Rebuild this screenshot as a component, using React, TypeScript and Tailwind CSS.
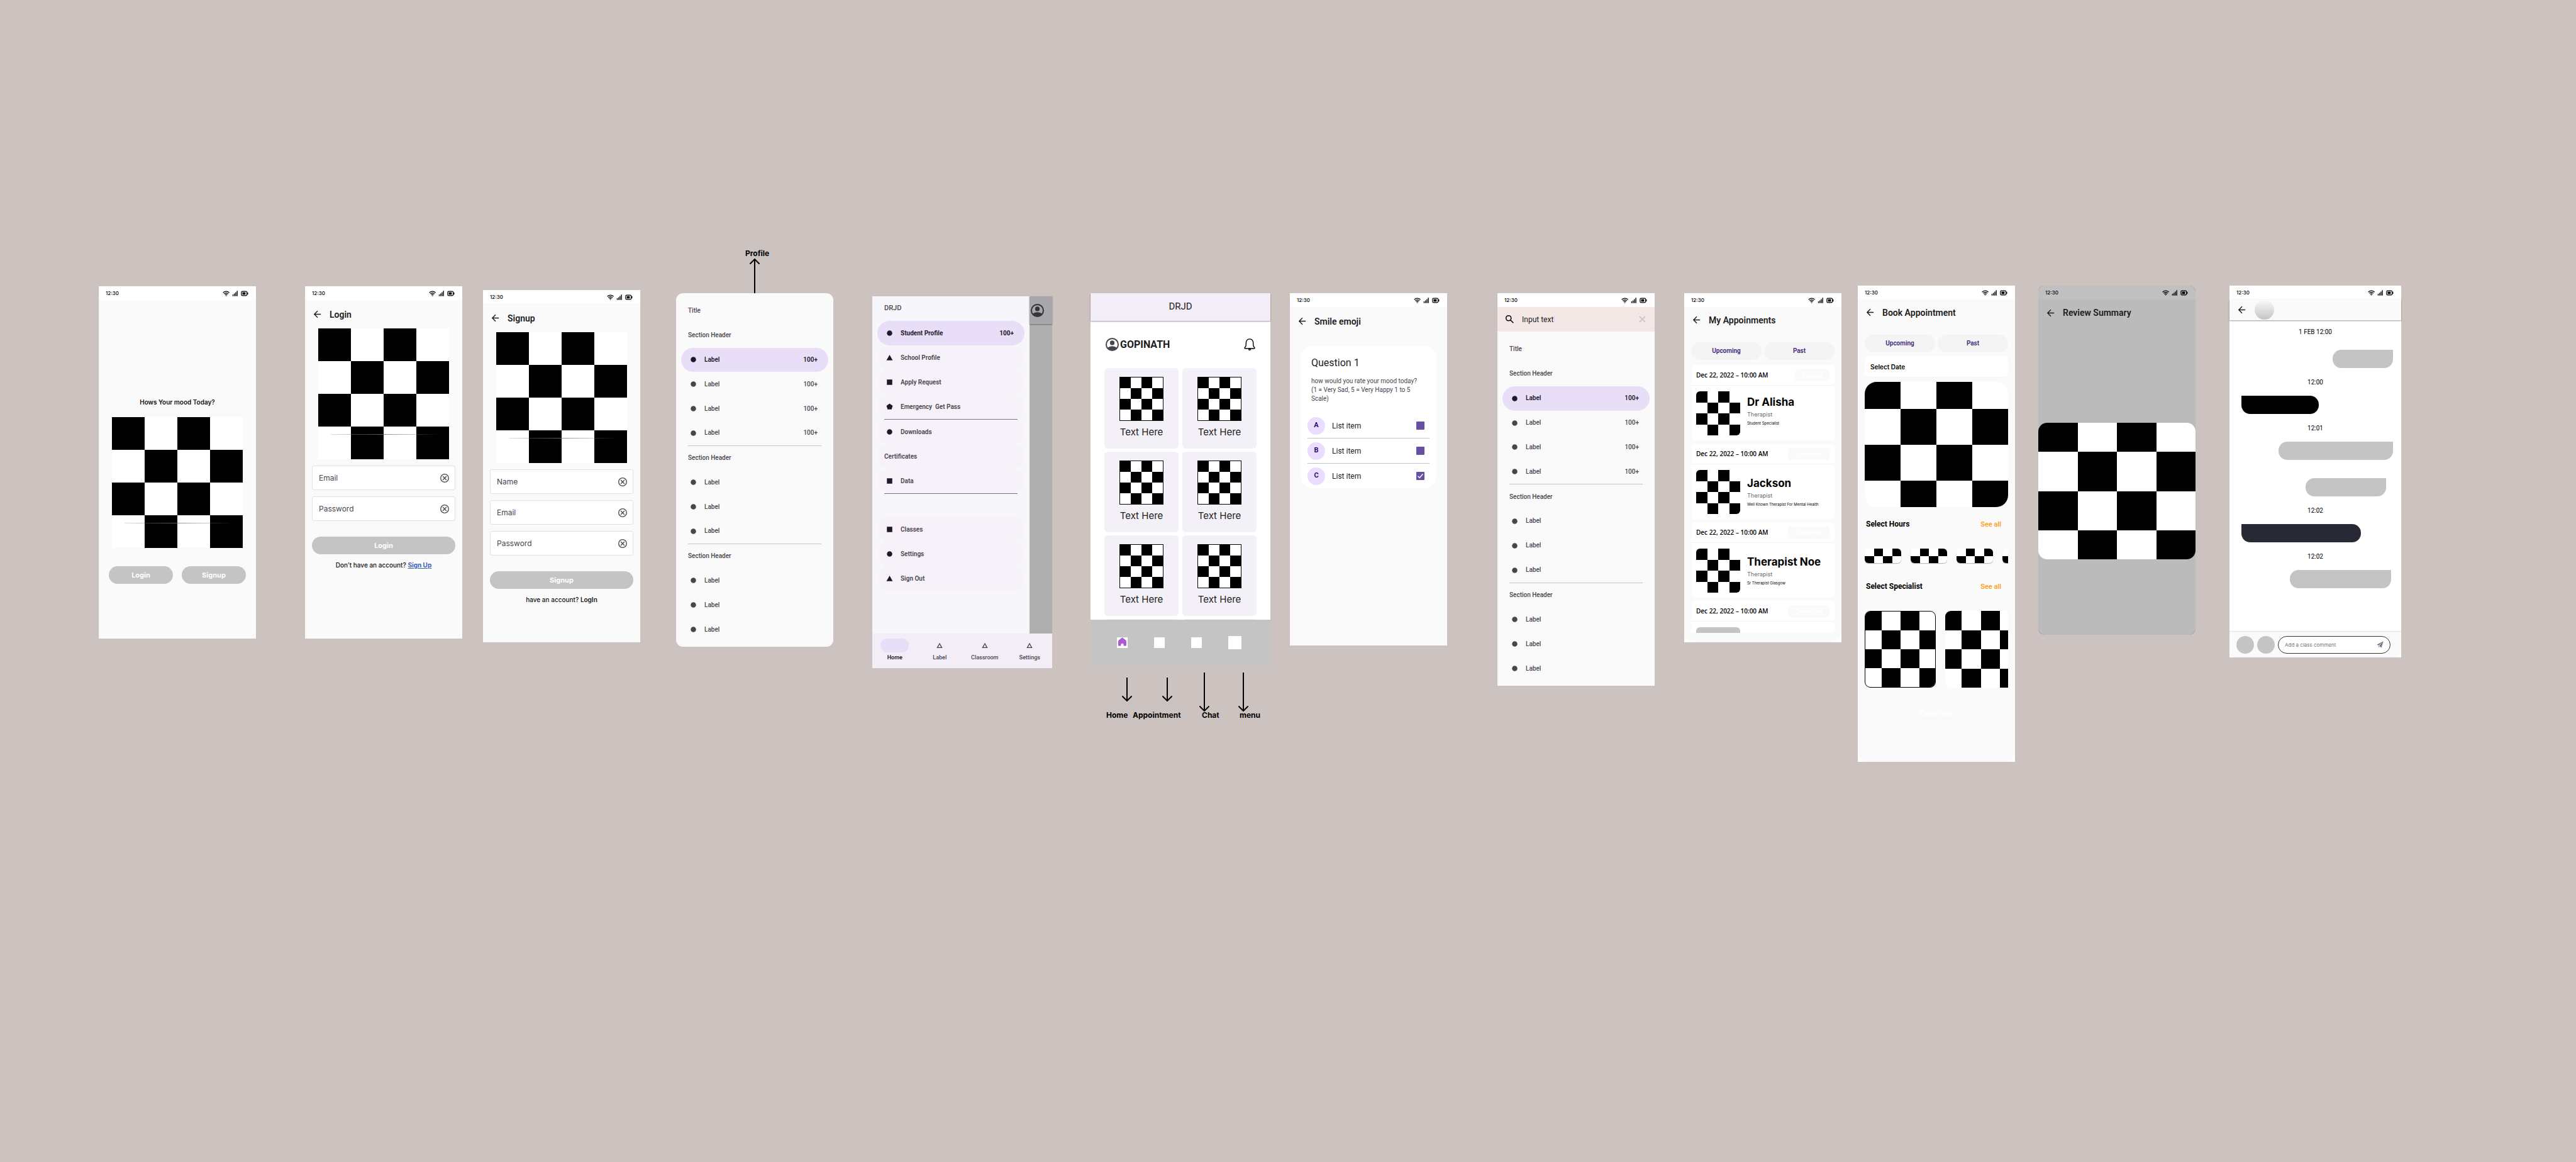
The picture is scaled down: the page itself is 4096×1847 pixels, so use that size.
import React from "react";
import type { ReactNode } from "react";

/* ---------- drawings ---------- */

function Checker({ className }: { className: string }) {
  const cells: ReactNode[] = [];
  for (let r = 0; r < 4; r++) {
    for (let c = 0; c < 4; c++) {
      if ((r + c) % 2 === 0) {
        cells.push(<rect key={`${r}-${c}`} x={c} y={r} width="1" height="1" fill="#000" />);
      }
    }
  }
  return (
    <svg
      aria-hidden="true"
      viewBox="0 0 4 4"
      preserveAspectRatio="xMidYMid slice"
      shapeRendering="crispEdges"
      className={`block shrink-0 overflow-hidden bg-white ${className}`}
    >
      {cells}
    </svg>
  );
}

function BackArrow() {
  return (
    <button aria-label="Back" className="size-[17px] shrink-0 text-[#1d1b20]">
      <svg viewBox="0 0 24 24" fill="currentColor" className="size-full">
        <path d="M20 11H7.83l5.59-5.59L12 4l-8 8 8 8 1.41-1.41L7.83 13H20v-2z" />
      </svg>
    </button>
  );
}

function AccountIcon({ className }: { className: string }) {
  return (
    <svg viewBox="0 0 30 30" className={className} aria-hidden="true">
      <circle cx="15" cy="15" r="13.6" fill="none" stroke="currentColor" strokeWidth="2.8" />
      <circle cx="15" cy="11.4" r="5.2" fill="currentColor" />
      <path d="M4 23C7 20.4 10.5 18.8 15 18.8S23 20.4 26 23A13.8 13.8 0 0 1 4 23z" fill="currentColor" />
    </svg>
  );
}

function ClearIcon() {
  return (
    <svg viewBox="0 0 20 20" className="size-[14px]" fill="none" stroke="#49454f" strokeWidth="1.9">
      <circle cx="10" cy="10" r="9" />
      <path d="M5.8 5.8l8.4 8.4M14.2 5.8l-8.4 8.4" />
    </svg>
  );
}

type Shape = "circle" | "triangle" | "square" | "pentagon";

function ShapeIcon({ shape }: { shape: Shape }) {
  return (
    <svg viewBox="0 0 24 24" className="size-[17px] shrink-0" fill="currentColor" aria-hidden="true">
      {shape === "circle" && <circle cx="12" cy="12" r="6" />}
      {shape === "triangle" && <path d="M12 5.5l7 12.5H5z" />}
      {shape === "square" && <rect x="6" y="6" width="12" height="12" />}
      {shape === "pentagon" && <path d="M12 5l7 5-2.6 8H7.6L5 10z" />}
    </svg>
  );
}

function StatusBar({ className = "bg-white" }: { className?: string }) {
  return (
    <div className={`flex h-[22px] shrink-0 items-center justify-between pl-[11px] pr-3 ${className}`}>
      <span className="font-['Inter'] text-[8px] leading-none font-medium text-black">12:30</span>
      <svg viewBox="0 0 59 13" className="h-[9px] w-[41px]" fill="none" stroke="#000" aria-hidden="true">
        <path d="M.8 4.8Q8 -1.4 15.2 4.8M3 7.4Q8 3.4 13 7.4M5.3 9.9Q8 7.8 10.7 9.9" strokeWidth="1.8" />
        <path d="M6.3 11.2h3.4L8 13z" fill="#000" stroke="none" />
        <path d="M23.7 8.5v4M26.9 6.5v6M30.1 3.5v9M33.3 .5v12" strokeWidth="2" />
        <rect x="43" y="1.6" width="12.6" height="9.8" rx="2.4" strokeWidth="1.7" />
        <rect x="45.4" y="3.8" width="7" height="5.4" fill="#000" stroke="none" />
        <path d="M57.4 4v5" strokeWidth="1.8" />
      </svg>
    </div>
  );
}

function Arrow({ className, height, down = false }: { className: string; height: number; down?: boolean }) {
  const tip = down ? height - 1 : 1;
  const wing = down ? height - 8 : 8;
  const tail = down ? 0 : height;
  return (
    <svg
      aria-hidden="true"
      width="18"
      height={height}
      viewBox={`0 0 18 ${height}`}
      fill="none"
      stroke="#000"
      strokeWidth="2"
      strokeLinecap="round"
      className={`absolute ${className}`}
    >
      <path d={`M9 ${tail}V${tip}M2 ${wing}L9 ${tip}L16 ${wing}`} />
    </svg>
  );
}

/* ---------- shared pieces ---------- */

function Screen({ className, label, children }: { className: string; label: string; children: ReactNode }) {
  return (
    <section aria-label={label} className={`absolute flex flex-col ${className}`}>
      {children}
    </section>
  );
}

function TitleBar({ title, className = "h-[45px]" }: { title: string; className?: string }) {
  return (
    <header className={`flex shrink-0 items-center gap-[11px] px-[11px] ${className}`}>
      <BackArrow />
      <h1 className="font-['Roboto'] text-[14px] leading-none font-semibold text-[#1d1b20]">{title}</h1>
    </header>
  );
}

function Illustration() {
  return (
    <div className="relative mx-auto w-[208px]">
      <Checker className="size-[208px]" />
      <div className="absolute top-[168px] left-5 h-px w-[168px] bg-linear-to-r from-[#666]/20 via-[#777]/80 to-[#666]/10" />
    </div>
  );
}

function Field({ id, label, type = "text" }: { id: string; label: string; type?: string }) {
  return (
    <div className="flex h-[39px] items-center rounded-[3px] border border-[#e2e2e4] bg-white pr-[9px] pl-[10px]">
      <input
        id={id}
        type={type}
        aria-label={label}
        placeholder={label}
        className="min-w-0 flex-1 bg-transparent font-['Inter'] text-[12px] text-[#49454f] outline-none placeholder:text-[#49454f]"
      />
      <button type="button" aria-label={`Clear ${label}`}>
        <ClearIcon />
      </button>
    </div>
  );
}

const pill =
  "h-7 rounded-full bg-[#c4c4c4] font-['Inter'] text-[11px] leading-none font-bold text-white";

function NavRow({
  label,
  count,
  shape = "circle",
  className,
}: {
  label: string;
  count?: string;
  shape?: Shape;
  className: string;
}) {
  return (
    <a
      href="#"
      className={`mx-2 flex items-center gap-[9px] rounded-full pr-[17px] pl-[11px] font-['Roboto'] text-[10px] leading-none whitespace-pre ${className}`}
    >
      <ShapeIcon shape={shape} />
      <span className="flex-1">{label}</span>
      {count && <span>{count}</span>}
    </a>
  );
}

function SectionText({ children }: { children: string }) {
  return (
    <h2 className="flex flex-1 items-center pl-[19px] font-['Roboto'] text-[10px] leading-none font-medium text-[#49454f]">
      {children}
    </h2>
  );
}

const Rule = () => <hr className="mx-[19px] border-[#c1c3cd]" />;

function DrawerList() {
  const plain = "flex-1 font-medium text-[#49454f]";
  const group = [0, 1, 2];
  return (
    <nav className="flex flex-1 flex-col pt-[9px] pb-2">
      <SectionText>Title</SectionText>
      <SectionText>Section Header</SectionText>
      <NavRow label="Label" count="100+" className="flex-1 bg-[#e8def8] font-semibold text-[#1d192b]" />
      {group.map((i) => (
        <NavRow key={i} label="Label" count="100+" className={plain} />
      ))}
      <Rule />
      <SectionText>Section Header</SectionText>
      {group.map((i) => (
        <NavRow key={i} label="Label" className={plain} />
      ))}
      <Rule />
      <SectionText>Section Header</SectionText>
      {group.map((i) => (
        <NavRow key={i} label="Label" className={plain} />
      ))}
    </nav>
  );
}

function Tabs() {
  return (
    <div className="mx-[11px] mt-[15px] grid shrink-0 grid-cols-2 gap-1">
      {["Upcoming", "Past"].map((t) => (
        <button
          key={t}
          className="h-7 rounded-full bg-[#f4f4f4] font-['Roboto'] text-[10px] leading-none font-semibold text-[#41277b]"
        >
          {t}
        </button>
      ))}
    </div>
  );
}

/* ---------- screens ---------- */

function Welcome() {
  return (
    <Screen label="Welcome" className="top-[455px] left-[157px] h-[560px] w-[250px] bg-[#fafafa]">
      <StatusBar />
      <p className="mt-[153px] text-center font-['Inter'] text-[10px] leading-[18px] font-semibold text-[#111]">
        Hows Your mood Today?
      </p>
      <div className="mt-[15px]">
        <Illustration />
      </div>
      <div className="mx-4 mt-[29px] grid grid-cols-2 gap-[14px]">
        <button className={pill}>Login</button>
        <button className={pill}>Signup</button>
      </div>
    </Screen>
  );
}

function Login() {
  return (
    <Screen label="Login" className="top-[455px] left-[485px] h-[560px] w-[250px] bg-[#fafafa]">
      <StatusBar />
      <TitleBar title="Login" />
      <Illustration />
      <form className="mx-[11px] mt-[10px] flex flex-col gap-[10px]">
        <Field id="login-email" label="Email" type="email" />
        <Field id="login-password" label="Password" type="password" />
        <button type="button" className={`mt-[15px] ${pill}`}>
          Login
        </button>
      </form>
      <p className="mt-2 text-center font-['Inter'] text-[10px] leading-[18px] font-medium text-[#111]">
        Don’t have an account?{" "}
        <a href="#" className="font-bold text-[#3d63b5] underline">
          Sign Up
        </a>
      </p>
    </Screen>
  );
}

function Signup() {
  return (
    <Screen label="Signup" className="top-[461px] left-[768px] h-[560px] w-[250px] bg-[#fafafa]">
      <StatusBar />
      <TitleBar title="Signup" />
      <Illustration />
      <form className="mx-[11px] mt-[10px] flex flex-col gap-[10px]">
        <Field id="signup-name" label="Name" />
        <Field id="signup-email" label="Email" type="email" />
        <Field id="signup-password" label="Password" type="password" />
        <button type="button" className={`mt-[15px] ${pill}`}>
          Signup
        </button>
      </form>
      <p className="mt-2 text-center font-['Inter'] text-[10px] leading-[18px] font-medium text-[#111]">
        have an account?{" "}
        <a href="#" className="font-semibold">
          LogIn
        </a>
      </p>
    </Screen>
  );
}

function ProfileDrawer() {
  return (
    <Screen label="Profile" className="top-[466px] left-[1075px] h-[562px] w-[250px] rounded-[11px] bg-[#fafafa]">
      <DrawerList />
    </Screen>
  );
}

function StudentDrawer() {
  const row = "h-[39px] bg-[#f7f2fa] font-semibold text-[#49454f] [&_svg]:text-[#1d192b]";
  return (
    <Screen label="Student menu" className="top-[471px] left-[1387px] h-[591px] w-[286px] bg-[#afafaf]">
      <div className="flex flex-1">
        <nav className="flex w-[250px] flex-col bg-[#f7f6fb]">
          <h1 className="flex h-[39px] items-center pl-[19px] font-['Roboto'] text-[11px] font-medium text-[#49454f]">
            DRJD
          </h1>
          <NavRow label="Student Profile" count="100+" className="h-[39px] bg-[#e8def8] font-bold text-[#1d192b]" />
          <NavRow label="School Profile" shape="triangle" className={row} />
          <NavRow label="Apply Request" shape="square" className={row} />
          <NavRow label="Emergency  Get Pass" shape="pentagon" className={row} />
          <hr className="mx-[19px] border-[#79747e]" />
          <NavRow label="Downloads" className={row} />
          <h2 className="mx-2 flex h-[39px] items-center rounded-full bg-[#f7f2fa] pl-[11px] font-['Roboto'] text-[10px] leading-none font-semibold text-[#49454f]">
            Certificates
          </h2>
          <NavRow label="Data" shape="square" className={row} />
          <hr className="mx-[19px] mb-[37px] border-[#79747e]" />
          <NavRow label="Classes" shape="square" className={row} />
          <NavRow label="Settings" className={row} />
          <NavRow label="Sign Out" shape="triangle" className={row} />
        </nav>
        <div className="flex-1">
          <div className="flex h-11 items-center bg-[#a9a6ac] pl-[2px] text-[#36343b] shadow-[0_1px_2px_rgba(0,0,0,0.4)]">
            <AccountIcon className="size-[21px]" />
          </div>
        </div>
      </div>
      <nav className="grid h-[55px] grid-cols-4 bg-[#f3edf7] pt-2">
        {["Home", "Label", "Classroom", "Settings"].map((t, i) => (
          <a
            key={t}
            href="#"
            className={`flex flex-col items-center gap-[3px] font-['Roboto'] text-[9px] leading-[11px] ${
              i === 0 ? "font-semibold text-[#1d1b20]" : "font-medium text-[#49454f]"
            }`}
          >
            {i === 0 ? (
              <span className="h-[22px] w-[45px] rounded-full bg-[#e8def8]" />
            ) : (
              <svg viewBox="0 0 24 24" className="my-[3px] size-4" fill="none" stroke="currentColor" strokeWidth="2">
                <path d="M12 7.5l5.3 9.5H6.7z" />
              </svg>
            )}
            {t}
          </a>
        ))}
      </nav>
    </Screen>
  );
}

function Dashboard() {
  return (
    <Screen label="Dashboard" className="top-[466px] left-[1734px] h-[591px] w-[286px] bg-white">
      <header className="flex h-11 shrink-0 items-center justify-center bg-[#f3edf7] pb-[2px] shadow-[0_1px_2px_rgba(0,0,0,0.4)]">
        <h1 className="font-['Roboto'] text-[15px] leading-none text-[#1d1b20]">DRJD</h1>
      </header>
      <div className="flex h-[75px] shrink-0 items-center gap-[2px] px-6">
        <AccountIcon className="size-[21px] text-[#49454f]" />
        <span className="flex-1 font-['Roboto'] text-[16px] leading-none font-bold text-[#1d1b20]">GOPINATH</span>
        <button aria-label="Notifications">
          <svg viewBox="0 0 26 28" className="h-[19px] w-[18px]" fill="none" stroke="#000" strokeWidth="2">
            <path d="M2.3 23.5c-1.2 0-1.6-1.4-.7-2.2C3.8 19.4 4.6 18 4.6 15v-3.5C4.6 5 7.8 1.2 13 1.2s8.4 3.8 8.4 10.3V15c0 3 .8 4.4 3 6.3.9.8.5 2.200-.7 2.200z" />
            <circle cx="13" cy="25.3" r="1.9" />
          </svg>
        </button>
      </div>
      <div className="grid h-[400px] shrink-0 auto-rows-[128px] grid-cols-2 gap-x-[6px] gap-y-[5px] overflow-hidden px-[22px]">
        {[0, 1, 2, 3, 4, 5].map((i) => (
          <article key={i} className="flex flex-col items-center rounded-[6px] bg-[#f3f0f8] pt-[14px]">
            <Checker className="size-[70px] border border-black" />
            <p className="mt-2 font-['Inter'] text-[15px] leading-5 text-[#1d1b20]">Text Here</p>
          </article>
        ))}
        <article className="rounded-[6px] bg-[#f3f0f8]" />
        <article className="rounded-[6px] bg-[#f3f0f8]" />
      </div>
      <nav className="flex flex-1 items-center gap-[42px] bg-[#c4c4c4] pl-[42px]">
        <button aria-label="Home" className="flex size-[17px] justify-center bg-white">
          <svg viewBox="0 0 19 20" className="h-[14px] w-[13px]" fill="#ae5ad5">
            <path d="M9.5 0 17.5 6.5Q19 7.8 19 9.5V17.5Q19 20 16.5 20H14.5Q12.5 20 12.5 18V16.5Q12.5 14 9.5 14T6.5 16.5V18Q6.5 20 4.5 20H2.5Q0 20 0 17.5V9.5Q0 7.8 1.5 6.5z" />
          </svg>
        </button>
        <button aria-label="Appointment" className="size-[17px] bg-white" />
        <button aria-label="Chat" className="size-[17px] bg-white" />
        <button aria-label="Menu" className="size-[21px] bg-white" />
      </nav>
    </Screen>
  );
}

function SmileQuestion() {
  return (
    <Screen label="Smile emoji" className="top-[466px] left-[2051px] h-[560px] w-[250px] bg-[#fafafa]">
      <StatusBar />
      <TitleBar title="Smile emoji" />
      <article className="mx-[17px] mt-4 rounded-[19px] bg-white pt-[17px]">
        <h2 className="px-[17px] font-['Roboto'] text-[16px] leading-[22px] text-[#1d1b20]">Question 1</h2>
        <p className="mt-[11px] mb-4 px-[17px] font-['Roboto'] text-[10px] leading-[14px] text-[#49454f]">
          how would you rate your mood today?
          <br />
          (1 = Very Sad, 5 = Very Happy 1 to 5
          <br />
          Scale)
        </p>
        <ul className="mx-[11px] divide-y divide-[#c1c3cd]">
          {["A", "B", "C"].map((l) => (
            <li key={l}>
              <label className="flex h-[39px] items-center gap-[11px] pr-2">
                <span className="flex size-7 items-center justify-center rounded-full bg-[#eaddff] font-['Roboto'] text-[11px] font-semibold text-[#21005d]">
                  {l}
                </span>
                <span className="flex-1 font-['Roboto'] text-[12px] leading-none text-[#1d1b20]">List item</span>
                <span className="relative size-[13px]">
                  <input
                    type="checkbox"
                    defaultChecked={l === "C"}
                    className="peer block size-[13px] appearance-none rounded-[1px] bg-[#6750a4]"
                  />
                  <svg
                    viewBox="0 0 18 18"
                    className="pointer-events-none absolute inset-0 hidden size-full peer-checked:block"
                    fill="none"
                    stroke="#fff"
                    strokeWidth="2"
                  >
                    <path d="M3.5 9.3l3.7 3.7L14.5 5" />
                  </svg>
                </span>
              </label>
            </li>
          ))}
        </ul>
      </article>
    </Screen>
  );
}

function SearchDrawer() {
  return (
    <Screen label="Search" className="top-[466px] left-[2381px] h-[624px] w-[250px] bg-[#fafafa]">
      <StatusBar />
      <div className="flex h-[39px] shrink-0 items-center bg-[#f3e8e6] px-[11px]">
        <svg viewBox="0 0 24 24" className="mr-[11px] size-[17px]" fill="none" stroke="#000" strokeWidth="2.2">
          <circle cx="9.5" cy="9.5" r="5.7" />
          <path d="M13.8 13.8l6.4 6.4" />
        </svg>
        <input
          aria-label="Search"
          defaultValue="Input text"
          className="[field-sizing:content] bg-transparent font-['Roboto'] text-[12px] text-[#1d1b20] outline-none"
        />
        <span className="ml-px h-[11px] w-px bg-[#dccdf2]" />
        <button aria-label="Clear" className="ml-auto size-[17px]">
          <svg viewBox="0 0 24 24" className="size-full" fill="none" stroke="#cac4d0" strokeWidth="2.4">
            <path d="M5.5 5.5l13 13M18.5 5.5l-13 13" />
          </svg>
        </button>
      </div>
      <DrawerList />
    </Screen>
  );
}

function BookingHeader({ status }: { status: string }) {
  return (
    <div className="flex h-[33px] items-center justify-between border-b border-[#f2f2f2] px-2">
      <time className="font-['Open_Sans'] text-[10px] leading-none font-semibold text-black">
        Dec 22, 2022 – 10:00 AM
      </time>
      <span className="rounded-[5px] bg-[#fafafa] px-[11px] py-[4px] font-['Inter'] text-[9px] leading-[11px] font-bold text-white">
        {status}
      </span>
    </div>
  );
}

function Appointments() {
  const list = [
    { name: "Dr Alisha", note: "Student Specialist", status: "Booked", pad: "pt-[14px]" },
    { name: "Jackson", note: "Well Known Therapist For Mental Health", status: "Cancelled", pad: "pt-[18px]" },
    { name: "Therapist Noe", note: "Sr Therapist Glasgow", status: "Cancelled", pad: "pt-[18px]" },
  ];
  return (
    <Screen label="My Appoinments" className="top-[466px] left-[2678px] h-[555px] w-[250px] bg-white">
      <StatusBar />
      <div className="flex min-h-0 flex-1 flex-col rounded-b-[17px] bg-[#fafafa]">
        <TitleBar title="My Appoinments" className="h-[41px]" />
        <Tabs />
        <div className="mx-[11px] mt-2 mb-[15px] flex min-h-0 flex-1 flex-col gap-[5px] overflow-hidden">
          {list.map((a) => (
            <article key={a.name} className="h-[120px] shrink-0 rounded-[6px] bg-white">
              <BookingHeader status={a.status} />
              <div className="flex gap-[11px] px-2">
                <Checker className="mt-[9px] size-[70px] rounded-[6px]" />
                <div className={`whitespace-nowrap ${a.pad}`}>
                  <h2 className="font-['Inter'] text-[17px] leading-6 font-bold text-black">{a.name}</h2>
                  <p className="font-['Inter'] text-[9px] leading-[15px] text-[#6b6b6b]">Therapist</p>
                  <p className="font-['Inter'] text-[6px] leading-[14px] text-black">{a.note}</p>
                </div>
              </div>
            </article>
          ))}
          <article className="h-[120px] shrink-0 rounded-[6px] bg-white">
            <BookingHeader status="Cancelled" />
            <div className="mx-2 mt-[9px] size-[70px] rounded-[6px] bg-[#c4c4c4]" />
          </article>
        </div>
      </div>
    </Screen>
  );
}

function SectionBar({ title, className }: { title: string; className: string }) {
  return (
    <div
      className={`flex h-5 shrink-0 items-center justify-between pr-[22px] pl-[13px] font-['Roboto'] text-[12px] leading-none ${className}`}
    >
      <h2 className="font-bold text-black">{title}</h2>
      <a href="#" className="text-[11px] font-medium text-[#ff9a0a]">
        See all
      </a>
    </div>
  );
}

function BookAppointment() {
  return (
    <Screen label="Book Appointment" className="top-[454px] left-[2954px] h-[757px] w-[250px] bg-white">
      <StatusBar />
      <div className="flex flex-1 flex-col rounded-b-[17px] bg-[#fafafa]">
        <TitleBar title="Book Appointment" className="h-[41px]" />
        <Tabs />
        <h2 className="mx-[11px] mt-[6px] flex h-[33px] items-center rounded-[6px] bg-white pl-[9px] font-['Inter'] text-[10px] leading-none font-semibold text-black shadow-[0_1px_0_rgba(0,0,0,0.02)]">
          Select Date
        </h2>
        <Checker className="mx-[11px] mt-2 h-[199px] w-[228px] rounded-[19px]" />
        <SectionBar title="Select Hours" className="mt-[17px]" />
        <div className="mx-[11px] mt-[26px] flex gap-[15px] overflow-hidden py-[3px]">
          {[0, 1, 2, 3].map((i) => (
            <Checker key={i} className="h-[23px] w-[58px] rounded-[6px] shadow-[0_1px_1px_rgba(0,0,0,0.3)]" />
          ))}
        </div>
        <SectionBar title="Select Specialist" className="mt-6" />
        <div className="mx-[11px] mt-[29px] flex gap-[15px] overflow-hidden">
          <Checker className="h-[122px] w-[113px] rounded-[9px] border border-black" />
          <Checker className="h-[122px] w-[113px] rounded-[9px]" />
        </div>
        <button className="mx-[11px] mt-[30px] h-[21px] font-['Roboto'] text-[13px] leading-none font-bold text-white">
          Continue
        </button>
      </div>
    </Screen>
  );
}

function ReviewSummary() {
  return (
    <Screen label="Review Summary" className="top-[454px] left-[3241px] h-[555px] w-[250px] overflow-hidden rounded-[9px] bg-[#a39b9a]">
      <div className="flex-1 overflow-hidden rounded-[11px] bg-[#bbb]">
        <StatusBar className="bg-[#c0c0c0]" />
        <TitleBar title="Review Summary" className="h-[42px]" />
        <Checker className="mt-[154px] h-[217px] w-[250px] rounded-[14px]" />
      </div>
    </Screen>
  );
}

function Stamp({ children }: { children: string }) {
  return <time className="text-center font-['Roboto'] text-[10px] leading-[13px] text-black">{children}</time>;
}

function Chat() {
  const sent = "h-[29px] self-end rounded-[14px] rounded-tr-none bg-[#c4c4c4]";
  const received = "h-[29px] self-start rounded-[14px] rounded-tl-none";
  return (
    <Screen label="Chat" className="top-[454px] left-[3545px] h-[591px] w-[273px] bg-white">
      <StatusBar />
      <header className="flex h-[33px] shrink-0 items-center gap-3 bg-[#fafafa] px-[11px] shadow-[0_1px_2px_rgba(0,0,0,0.4)]">
        <BackArrow />
        <div className="size-[31px] rounded-full bg-linear-to-b from-[#fafafa] to-[#c4c4c4]" />
      </header>
      <div className="flex flex-1 flex-col pt-3">
        <Stamp>1 FEB 12:00</Stamp>
        <div className={`mt-[22px] mr-[13px] mb-4 w-24 ${sent}`} />
        <Stamp>12:00</Stamp>
        <div className={`mt-[15px] mb-4 ml-[19px] w-[123px] bg-black ${received}`} />
        <Stamp>12:01</Stamp>
        <div className={`mt-[15px] mr-[13px] w-[182px] ${sent}`} />
        <div className={`mt-[29px] mr-6 mb-4 w-32 ${sent}`} />
        <Stamp>12:02</Stamp>
        <div className={`mt-[15px] mb-4 ml-[19px] w-[190px] bg-[#272935] ${received}`} />
        <Stamp>12:02</Stamp>
        <div className={`mt-[15px] mr-4 w-[161px] ${sent}`} />
      </div>
      <footer className="flex h-[42px] shrink-0 items-center gap-[5px] rounded-b-[11px] border-t border-[#e2e2e2] bg-[#fafafa] pr-[17px] pl-[11px]">
        <button aria-label="Attach" className="size-7 shrink-0 rounded-full bg-[#c4c4c4]" />
        <button aria-label="Camera" className="size-7 shrink-0 rounded-full bg-[#c4c4c4]" />
        <div className="flex h-7 min-w-0 flex-1 items-center rounded-full border border-[#333] bg-white px-[10px]">
          <input
            aria-label="Comment"
            placeholder="Add a class comment"
            className="min-w-0 flex-1 bg-transparent font-['Inter'] text-[8px] outline-none placeholder:text-[#79747e]"
          />
          <button aria-label="Send">
            <svg viewBox="0 0 24 24" className="size-[11px]" fill="#7a7289">
              <path d="M23.5.5.5 12.5 7 15 20.5 4 9.3 16.2 16.5 23.5zM6.500 16.500 8 22.500 10.500 19z" />
            </svg>
          </button>
        </div>
      </footer>
    </Screen>
  );
}

function Note({ className, children }: { className: string; children: string }) {
  return (
    <p className={`absolute font-['Inter'] text-[12px] leading-4 font-bold text-black ${className}`}>{children}</p>
  );
}

export default function App() {
  return (
    <main className="relative min-h-screen w-full overflow-hidden bg-[#ccc2c0]">
      <Welcome />
      <Login />
      <Signup />
      <Note className="top-[395px] left-[1185px]">Profile</Note>
      <Arrow className="top-[411px] left-[1191px]" height={55} />
      <ProfileDrawer />
      <StudentDrawer />
      <Dashboard />
      <Arrow className="top-[1077px] left-[1783px]" height={38} down />
      <Arrow className="top-[1077px] left-[1847px]" height={38} down />
      <Arrow className="top-[1069px] left-[1906px]" height={62} down />
      <Arrow className="top-[1069px] left-[1968px]" height={62} down />
      <Note className="top-[1129px] left-[1759px]">Home</Note>
      <Note className="top-[1129px] left-[1801px]">Appointment</Note>
      <Note className="top-[1129px] left-[1911px]">Chat</Note>
      <Note className="top-[1129px] left-[1971px]">menu</Note>
      <SmileQuestion />
      <SearchDrawer />
      <Appointments />
      <BookAppointment />
      <ReviewSummary />
      <Chat />
    </main>
  );
}
